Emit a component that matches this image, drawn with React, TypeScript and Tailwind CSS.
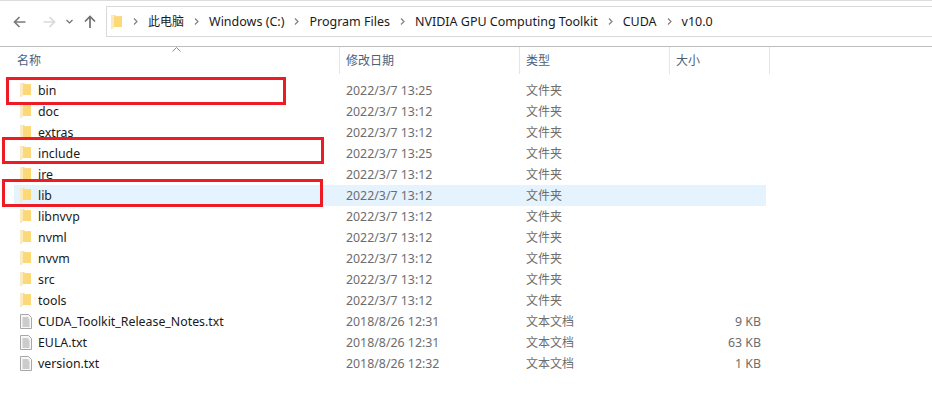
const FONT = "font-['Noto_Sans','Noto_Sans_CJK_SC',sans-serif]";

type Row = {
  name: string;
  date: string;
  kind: "folder" | "file";
  size?: string;
  selected?: boolean;
};

const rows: Row[] = [
  { name: "bin", date: "2022/3/7 13:25", kind: "folder" },
  { name: "doc", date: "2022/3/7 13:12", kind: "folder" },
  { name: "extras", date: "2022/3/7 13:12", kind: "folder" },
  { name: "include", date: "2022/3/7 13:25", kind: "folder" },
  { name: "jre", date: "2022/3/7 13:12", kind: "folder" },
  { name: "lib", date: "2022/3/7 13:12", kind: "folder", selected: true },
  { name: "libnvvp", date: "2022/3/7 13:12", kind: "folder" },
  { name: "nvml", date: "2022/3/7 13:12", kind: "folder" },
  { name: "nvvm", date: "2022/3/7 13:12", kind: "folder" },
  { name: "src", date: "2022/3/7 13:12", kind: "folder" },
  { name: "tools", date: "2022/3/7 13:12", kind: "folder" },
  { name: "CUDA_Toolkit_Release_Notes.txt", date: "2018/8/26 12:31", kind: "file", size: "9 KB" },
  { name: "EULA.txt", date: "2018/8/26 12:31", kind: "file", size: "63 KB" },
  { name: "version.txt", date: "2018/8/26 12:32", kind: "file", size: "1 KB" },
];

const crumbs = ["Windows (C:)", "Program Files", "NVIDIA GPU Computing Toolkit", "CUDA", "v10.0"];

function FolderIcon() {
  return (
    <svg width="11" height="14" viewBox="0 0 11 14" className="shrink-0">
      <path d="M0 0h4l1 1h6v11H3l-2 2H0z" fill="#fcdc8a" />
      <path d="M0 0h3v12l-2 2H0z" fill="#f9eac0" />
      <path d="M3 2h8v10H3z" fill="#fcd878" />
    </svg>
  );
}

function FileIcon() {
  return (
    <svg width="12" height="15" viewBox="0 0 12 15" className="shrink-0">
      <path d="M.5.5h8l3 3v11H.5z" fill="#f7f7f7" stroke="#a8a8a8" />
      <path d="M2.5 4h6M2.5 6h7M2.5 8h7M2.5 10h7M2.5 12h7" stroke="#a0a0a0" />
    </svg>
  );
}

function Chevron() {
  return (
    <svg width="5" height="7" viewBox="0 0 5 7" className="shrink-0">
      <path d="M1 .5l3 3-3 3" fill="none" stroke="#808080" strokeWidth="1.2" />
    </svg>
  );
}

function Arrow({ color, flip }: { color: string; flip?: boolean }) {
  return (
    <svg width="13" height="12" viewBox="0 0 13 12" className={flip ? "rotate-180" : ""}>
      <path d="M12.5 6H1.5M6.5 1l-5 5 5 5" fill="none" stroke={color} strokeWidth="1.7" />
    </svg>
  );
}

function Toolbar() {
  return (
    <div className="flex h-[46px] items-start border-b border-[#bdbdbd] pt-[5px]">
      <div className="flex h-[31px] w-[106px] items-center pl-[13px]">
        <Arrow color="#7b7b7b" />
        <div className="ml-[17px]">
          <Arrow color="#d9d9d9" flip />
        </div>
        <svg width="7" height="5" viewBox="0 0 7 5" className="ml-[10px]">
          <path d="M.5 1l3 3 3-3" fill="none" stroke="#6f6f6f" strokeWidth="1.2" />
        </svg>
        <svg width="12" height="13" viewBox="0 0 12 13" className="ml-[11px]">
          <path d="M6 13V2M1 6.5l5-5 5 5" fill="none" stroke="#6f6f6f" strokeWidth="1.7" />
        </svg>
      </div>
      <div className="flex h-[31px] flex-1 items-center border border-r-0 border-[#d9d9d9] pl-[4px] text-[12.5px] text-[#1a1a1a]">
        <FolderIcon />
        <div className="ml-[11px] mr-[10px]">
          <Chevron />
        </div>
        <span className="text-[12px]">此电脑</span>
        {crumbs.map((c) => (
          <div key={c} className="flex items-center">
            <div className="mx-[10px]">
              <Chevron />
            </div>
            <span className="pt-[2px]">{c}</span>
          </div>
        ))}
      </div>
    </div>
  );
}

function HeaderCell({ label, width, className }: { label: string; width: string; className?: string }) {
  return (
    <div className={`flex h-[27px] items-center border-r border-[#e5e5e5] text-[12px] text-[#4c607a] ${width} ${className ?? ""}`}>
      {label}
    </div>
  );
}

function FileRow({ row }: { row: Row }) {
  return (
    <div className={`flex h-[21px] w-[752px] items-center text-[12.35px] ${row.selected ? "bg-[#e5f3ff]" : ""}`}>
      <div className="flex w-[325px] items-center">
        <div className="ml-[6px] flex w-[18px] justify-start">
          {row.kind === "folder" ? <FolderIcon /> : <FileIcon />}
        </div>
        <span className="pt-[2px] text-[#1a1a1a]">{row.name}</span>
      </div>
      <div className="w-[187px] pl-[7px] pt-[2px] text-[#6d6d6d]">{row.date}</div>
      <div className="w-[143px] text-[12px] text-[#6d6d6d]">{row.kind === "folder" ? "文件夹" : "文本文档"}</div>
      <div className="w-[92px] pt-[2px] text-right text-[#6d6d6d]">{row.size}</div>
    </div>
  );
}

function Marker({ className }: { className: string }) {
  return <div className={`absolute border-[3px] border-[#ed1c24] ${className}`} />;
}

export default function App() {
  return (
    <div className={`relative h-[411px] w-[932px] overflow-hidden border-t border-[#dcdcdc] bg-white ${FONT}`}>
      <Toolbar />
      <div className="relative ml-[1px] flex h-[27px]">
        <svg width="9" height="5" viewBox="0 0 9 5" className="absolute left-[171px] top-0">
          <path d="M.5 4.5l4-4 4 4" fill="none" stroke="#8a8a8a" />
        </svg>
        <HeaderCell label="名称" width="w-[339px]" className="pl-[16px]" />
        <HeaderCell label="修改日期" width="w-[180px]" className="pl-[6px]" />
        <HeaderCell label="类型" width="w-[150px]" className="pl-[6px]" />
        <HeaderCell label="大小" width="w-[100px]" className="pl-[6px]" />
      </div>
      <div className="ml-[14px] mt-[6px]">
        {rows.map((r) => (
          <FileRow key={r.name} row={r} />
        ))}
      </div>
      <Marker className="left-[6px] top-[76px] h-[28px] w-[280px]" />
      <Marker className="left-[2px] top-[136px] h-[27px] w-[322px]" />
      <Marker className="left-[2px] top-[178px] h-[28px] w-[321px]" />
    </div>
  );
}
